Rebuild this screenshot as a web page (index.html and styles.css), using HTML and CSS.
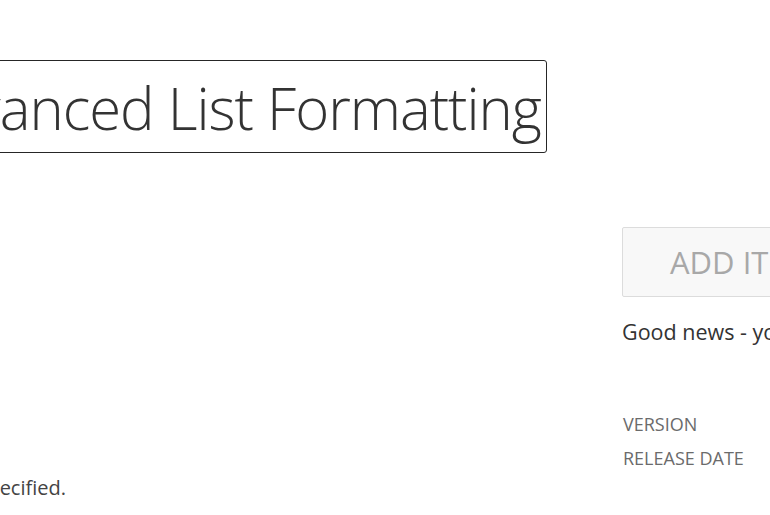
FILE: index.html
```html
<!DOCTYPE html>
<html lang="en">
<head>
<meta charset="utf-8">
<title>Advanced List Formatting</title>
<link rel="stylesheet" href="styles.css">
</head>
<body>
<div class="page">
  <main class="main">
    <h1 class="title">Advanced List Formatting</h1>
    <p class="desc">No description specified.</p>
  </main>
  <aside class="side">
    <button class="add-btn" type="button">ADD IT</button>
    <p class="news">Good news - you can add this app.</p>
    <dl class="meta">
      <div class="meta-row"><dt>VERSION</dt><dd>1.0.0.0</dd></div>
      <div class="meta-row"><dt>RELEASE DATE</dt><dd>2018</dd></div>
    </dl>
  </aside>
</div>
</body>
</html>
```

FILE: styles.css
```css
html, body {
  margin: 0;
  padding: 0;
  background: #ffffff;
  overflow: hidden;
}

body {
  width: 770px;
  height: 515px;
  font-family: "Open Sans", "Noto Sans", "Liberation Sans", sans-serif;
  color: #333333;
}

.page {
  display: flex;
  margin-left: -200px;
  width: 1400px;
}

.main {
  flex: 0 0 747px;
  display: flex;
  flex-direction: column;
  padding-top: 60px;
}

.title {
  align-self: flex-end;
  margin: 0;
  padding: 3px 5px 0 6px;
  border: 1.5px solid #262626;
  border-radius: 3px;
  font-size: 58px;
  font-weight: 300;
  line-height: 88px;
  letter-spacing: -1px;
  color: #333333;
  white-space: nowrap;
}

.desc {
  width: 266px;
  margin: 322px 0 0 0;
  text-align: right;
  white-space: nowrap;
  font-size: 20px;
  line-height: 26px;
  color: #444444;
}

.side {
  flex: 0 0 400px;
  margin-left: 75px;
  padding-top: 227px;
}

.add-btn {
  display: block;
  width: 260px;
  height: 70px;
  padding: 0 0 0 47px;
  text-align: left;
  border: 1px solid #dcdcdc;
  border-radius: 2px;
  background: #f8f8f8;
  font-family: inherit;
  font-size: 31px;
  font-weight: 400;
  color: #a8a8a8;
}

.news {
  margin: 20px 0 0 0;
  font-size: 21.5px;
  line-height: 30px;
  color: #333333;
  white-space: nowrap;
}

.meta {
  margin: 66px 0 0 1px;
}

.meta-row {
  display: flex;
  height: 34px;
  font-size: 18px;
  line-height: 22px;
}

.meta-row dt {
  width: 200px;
  color: #6b6b6b;
}

.meta-row dd {
  margin: 0;
  color: #333333;
}
```
